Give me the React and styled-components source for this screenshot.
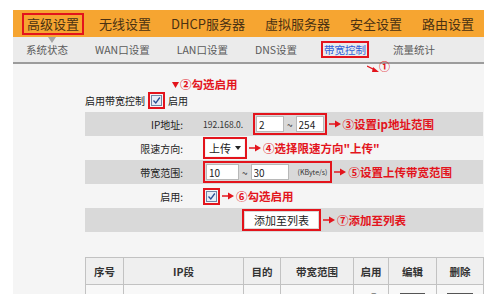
import React from 'react'
import styled, { createGlobalStyle } from 'styled-components'

const RED = '#e3141c'

const GlobalStyle = createGlobalStyle`
  html, body {
    margin: 0;
    padding: 0;
    background: #ffffff;
    overflow: hidden;
    font-family: "Noto Sans CJK SC", "Noto Sans", sans-serif;
  }
`
const Page = styled.div`
  width: 500px;
  padding: 10px 0 0 13px;
  box-sizing: border-box;
`
const Frame = styled.div`
  width: 471px;
`
const TopBar = styled.div`
  height: 27px;
  background-color: #f6a531;
  display: flex;
  align-items: center;
  padding-left: 9px;
  gap: 10px;
`
const MenuItem = styled.div`
  position: relative;
  font-size: 13px;
  line-height: 18px;
  color: #4a3112;
  padding: 0 3px;
  border: 2px solid ${p => (p.$active ? RED : 'transparent')};
  white-space: nowrap;
  &::after {
    content: '';
    display: ${p => (p.$active ? 'block' : 'none')};
    position: absolute;
    left: 24px;
    bottom: -10px;
    border-left: 4px solid transparent;
    border-right: 4px solid transparent;
    border-top: 6px solid #a5a5a5;
  }
`
const SubNav = styled.div`
  height: 25px;
  background-color: #ebebeb;
  border-bottom: 2px solid #9c9c9c;
  display: flex;
  align-items: center;
  padding-left: 10px;
  gap: 21px;
`
const SubItem = styled.div`
  position: relative;
  font-size: 10.5px;
  line-height: 13px;
  color: ${p => (p.$active ? '#2f5ed8' : '#5a5a5a')};
  padding: 0 1px;
  border: 2px solid ${p => (p.$active ? RED : 'transparent')};
  white-space: nowrap;
`
const Pointer = styled.div`
  position: absolute;
  left: 44px;
  top: 17px;
  display: flex;
  align-items: flex-end;
  color: ${RED};
  font-size: 11px;
  font-weight: bold;
`
const Panel = styled.div`
  background-color: #f5f5f5;
  padding: 13px 1px 0 72px;
  height: 240px;
`
const NoteLine = styled.div`
  height: 14px;
  display: flex;
  align-items: center;
  padding-left: 87px;
  gap: 1px;
`
const EnableLine = styled.div`
  height: 18px;
  margin-bottom: 3px;
  display: flex;
  align-items: center;
  gap: 3px;
  font-size: 10px;
  color: #222;
`
const FormRow = styled.div`
  height: 24px;
  display: grid;
  grid-template-columns: 100px 1fr;
  align-items: center;
  background-color: ${p => (p.$shade ? '#d9d9d9' : 'transparent')};
`
const Label = styled.div`
  text-align: right;
  padding-right: 2px;
  font-size: 10px;
  color: #222;
`
const Value = styled.div`
  display: flex;
  align-items: center;
  padding-left: ${p => p.$indent || 18}px;
  gap: 2px;
`
const Prefix = styled.span`
  font-size: 8.5px;
  color: #333;
  width: 48px;
`
const RedBox = styled.div`
  display: flex;
  align-items: center;
  gap: 3px;
  padding: 1px;
  border: 2px solid ${RED};
  font-size: 10px;
  color: #333;
`
const Field = styled.input`
  width: ${p => p.$w}px;
  height: 16px;
  box-sizing: border-box;
  border: 1px solid #b8b8b8;
  background: #ffffff;
  font-family: inherit;
  font-size: 10px;
  color: #222;
  padding: 0 2px;
  outline: none;
`
const Unit = styled.span`
  font-size: 7px;
  color: #333;
  padding: 0 2px 0 6px;
  white-space: nowrap;
`
const Select = styled.div`
  width: 38px;
  height: 16px;
  background: #ffffff;
  display: flex;
  align-items: center;
  justify-content: space-between;
  padding: 0 3px;
  box-sizing: border-box;
  font-size: 11px;
  color: #222;
`
const Check = styled.div`
  width: 11px;
  height: 11px;
  box-sizing: border-box;
  border: 1px solid #6f86a6;
  background: #e6edf7;
  display: flex;
  align-items: center;
  justify-content: center;
`
const AddButton = styled.div`
  background: #ffffff;
  font-size: 11px;
  color: #222;
  padding: 0 9px;
  height: 16px;
  line-height: 16px;
`
const Note = styled.span`
  color: ${RED};
  font-size: 11.5px;
  font-weight: bold;
  white-space: nowrap;
`
const Table = styled.table`
  margin-top: 25px;
  width: 398px;
  border-collapse: collapse;
  table-layout: fixed;
  font-size: 10.5px;
`
const Th = styled.th`
  height: 26px;
  background-color: #efefef;
  border: 1px solid #c2c2c2;
  color: #333;
  font-weight: bold;
  padding: 0;
`
const Td = styled.td`
  height: 26px;
  background-color: #f8f8f8;
  border: 1px solid #c2c2c2;
  text-align: center;
  color: #333;
  font-size: 10px;
  padding: 0;
`
const SmallBtn = styled.span`
  display: inline-block;
  border: 1px solid #555;
  background: #e2e2e2;
  font-size: 8.5px;
  line-height: 10px;
  padding: 0 3px;
`

const Arrow = () => (
  <svg width="12" height="8" viewBox="0 0 12 8">
    <line x1="0" y1="4" x2="7" y2="4" stroke={RED} strokeWidth="1.5" />
    <polygon points="6,0.5 12,4 6,7.5" fill={RED} />
  </svg>
)

const DownMark = () => (
  <svg width="7" height="7" viewBox="0 0 7 7">
    <polygon points="0,1 7,1 3.5,7" fill={RED} />
  </svg>
)

const Tick = () => (
  <svg width="9" height="9" viewBox="0 0 9 9">
    <path d="M1.5 4.5 L3.8 7 L7.8 1.5" stroke="#2b4e92" strokeWidth="1.3" fill="none" />
  </svg>
)

const Callout = ({ children }) => (
  <>
    <Arrow />
    <Note>{children}</Note>
  </>
)

const menus = ['高级设置', '无线设置', 'DHCP服务器', '虚拟服务器', '安全设置', '路由设置']
const tabs = ['系统状态', 'WAN口设置', 'LAN口设置', 'DNS设置', '带宽控制', '流量统计']
const columns = [
  ['序号', 38], ['IP段', 120], ['目的', 37], ['带宽范围', 73], ['启用', 35], ['编辑', 48], ['删除', 47]
]

const App = () => {
  return (
    <Page>
      <GlobalStyle />
      <Frame>
        <TopBar>
          {menus.map((m, i) => (
            <MenuItem key={m} $active={i === 0}>{m}</MenuItem>
          ))}
        </TopBar>
        <SubNav>
          {tabs.map(t => (
            <SubItem key={t} $active={t === '带宽控制'}>
              {t}
              {t === '带宽控制' && (
                <Pointer>
                  <svg width="12" height="8" viewBox="0 0 12 8">
                    <line x1="0" y1="1" x2="8" y2="5" stroke={RED} strokeWidth="1.3" />
                    <polygon points="6,2 12,7 5,7" fill={RED} />
                  </svg>
                  ①
                </Pointer>
              )}
            </SubItem>
          ))}
        </SubNav>
        <Panel>
          <NoteLine>
            <DownMark />
            <Note>②勾选启用</Note>
          </NoteLine>
          <EnableLine>
            启用带宽控制
            <RedBox><Check><Tick /></Check></RedBox>
            启用
          </EnableLine>

          <FormRow $shade>
            <Label>IP地址:</Label>
            <Value>
              <Prefix>192.168.0.</Prefix>
              <RedBox>
                <Field $w={28} readOnly value="2" />
                ~
                <Field $w={28} readOnly value="254" />
              </RedBox>
              <Callout>③设置ip地址范围</Callout>
            </Value>
          </FormRow>
          <FormRow>
            <Label>限速方向:</Label>
            <Value>
              <RedBox>
                <Select>
                  上传
                  <svg width="6" height="4" viewBox="0 0 6 4"><polygon points="0,0 6,0 3,4" fill="#222" /></svg>
                </Select>
              </RedBox>
              <Callout>④选择限速方向"上传"</Callout>
            </Value>
          </FormRow>
          <FormRow $shade>
            <Label>带宽范围:</Label>
            <Value>
              <RedBox>
                <Field $w={33} readOnly value="10" />
                ~
                <Field $w={38} readOnly value="30" />
                <Unit>(KByte/s)</Unit>
              </RedBox>
              <Callout>⑤设置上传带宽范围</Callout>
            </Value>
          </FormRow>
          <FormRow>
            <Label>启用:</Label>
            <Value>
              <RedBox><Check><Tick /></Check></RedBox>
              <Callout>⑥勾选启用</Callout>
            </Value>
          </FormRow>
          <FormRow $shade>
            <Label />
            <Value $indent={57}>
              <RedBox><AddButton>添加至列表</AddButton></RedBox>
              <Callout>⑦添加至列表</Callout>
            </Value>
          </FormRow>

          <Table>
            <colgroup>
              {columns.map(([c, w]) => <col key={c} style={{ width: w }} />)}
            </colgroup>
            <thead>
              <tr>{columns.map(([c]) => <Th key={c}>{c}</Th>)}</tr>
            </thead>
            <tbody>
              <tr>
                <Td>1</Td>
                <Td>192.168.0.2~254</Td>
                <Td>上传</Td>
                <Td>10~30</Td>
                <Td>√</Td>
                <Td><SmallBtn>编辑</SmallBtn></Td>
                <Td><SmallBtn>删除</SmallBtn></Td>
              </tr>
            </tbody>
          </Table>
        </Panel>
      </Frame>
    </Page>
  )
}

export default App
